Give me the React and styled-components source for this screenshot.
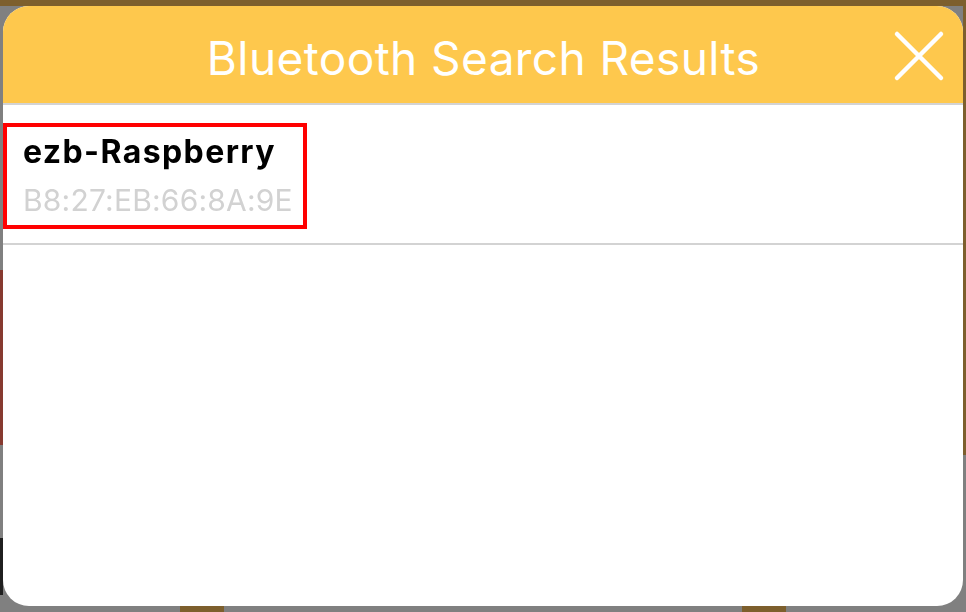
import styled, { createGlobalStyle } from 'styled-components'

const GlobalStyle = createGlobalStyle`
  html, body { margin:0; padding:0; width:966px; height:612px; overflow:hidden; }
  body { background:#808080; font-family:Inter, 'Noto Sans', sans-serif; }
`

const C = {
  backdrop:'#808080', brown:'#7d5f2d', red:'#873a30', dark:'#1f1f1f',
  yellow:'#fec84d', line:'#d3d3d3', white:'#ffffff', mac:'#d2d2d2', pick:'#ff0000',
}

// the dimmed app screen behind the dialog
const Backdrop = styled.div`
  width:966px; height:612px; background:${C.backdrop};
  display:flex; flex-direction:column;
`
const TopStrip = styled.div`height:6px; background:${C.brown};`
const Middle = styled.div`
  flex:1; display:flex; justify-content:space-between;
`
const Edge = styled.div`
  width:3px; display:flex; flex-direction:column;
`
const EdgeBit = styled.div`
  height:${p => p.h}px; width:${p => p.w ? `${p.w}px` : 'auto'};
  background:${p => p.c}; flex-shrink:0;
`
const BottomStrip = styled.div`
  height:6px; display:flex;
`

// modal layer sitting over the app
const Overlay = styled.div`
  position:fixed; inset:0; padding:6px 3px;
  display:flex;
`
const Dialog = styled.div`
  flex:1; background:${C.white};
  border-radius:26px; overflow:hidden;
  display:flex; flex-direction:column;
`
const Header = styled.div`
  height:97px; flex-shrink:0; background:${C.yellow};
  border-bottom:2px solid ${C.line};
  display:flex; align-items:center; justify-content:center;
  position:relative;
`
const Title = styled.div`
  font-family:Inter, 'Noto Sans', sans-serif; font-size:46px; font-weight:400;
  letter-spacing:0.4px;
  color:${C.white}; margin-top:6px; margin-left:1px; white-space:nowrap;
`
const CloseBtn = styled.button`
  position:absolute; right:18px; top:24px; width:52px; height:52px;
  background:none; border:none; padding:0; cursor:pointer;
  display:flex; align-items:center; justify-content:center;
`
const List = styled.div`
  display:flex; flex-direction:column;
`
const Item = styled.div`
  height:140px; border-bottom:2px solid ${C.line};
  padding-top:18px; box-sizing:border-box;
`
const ItemBox = styled.div`
  display:flex; flex-direction:column;
  border:4px solid ${p => p.selected ? C.pick : 'transparent'};
  padding:4px 10px 4px 16px; width:304px; box-sizing:border-box;
`
const Name = styled.div`
  font-family:Inter, 'Noto Sans', sans-serif; font-size:32px; font-weight:700;
  letter-spacing:1.4px; color:#000; line-height:42px; white-space:nowrap;
`
const Mac = styled.div`
  font-family:Inter, 'Noto Sans', sans-serif; font-size:30px; font-weight:400;
  letter-spacing:0.2px; color:${C.mac}; line-height:42px; margin-top:6px;
  white-space:nowrap;
`

const devices = [{ name:'ezb-Raspberry', mac:'B8:27:EB:66:8A:9E' }]

export default function App() {
  return (
    <>
      <GlobalStyle />
      <Backdrop>
        <TopStrip />
        <Middle>
          <Edge>
            <EdgeBit h={264} c={C.backdrop} />
            <EdgeBit h={175} c={C.red} />
            <EdgeBit h={93} c={C.backdrop} />
            <EdgeBit h={57} c={C.dark} />
          </Edge>
          <Edge>
            <EdgeBit h={449} c={C.brown} />
          </Edge>
        </Middle>
        <BottomStrip>
          <EdgeBit h={6} w={180} c={C.backdrop} />
          <EdgeBit h={6} w={44} c={C.brown} />
          <EdgeBit h={6} w={518} c={C.backdrop} />
          <EdgeBit h={6} w={44} c={C.brown} />
        </BottomStrip>
      </Backdrop>
      <Overlay>
        <Dialog>
          <Header>
            <Title>Bluetooth Search Results</Title>
            <CloseBtn aria-label="close">
              <svg width="52" height="52" viewBox="0 0 52 52">
                <path d="M4 4 L48 48 M48 4 L4 48" stroke="#fff" strokeWidth="4.5" strokeLinecap="round" />
              </svg>
            </CloseBtn>
          </Header>
          <List>
            {devices.map((d, i) => (
              <Item key={d.mac}>
                <ItemBox selected={i === 0}>
                  <Name>{d.name}</Name>
                  <Mac>{d.mac}</Mac>
                </ItemBox>
              </Item>
            ))}
          </List>
        </Dialog>
      </Overlay>
    </>
  )
}
